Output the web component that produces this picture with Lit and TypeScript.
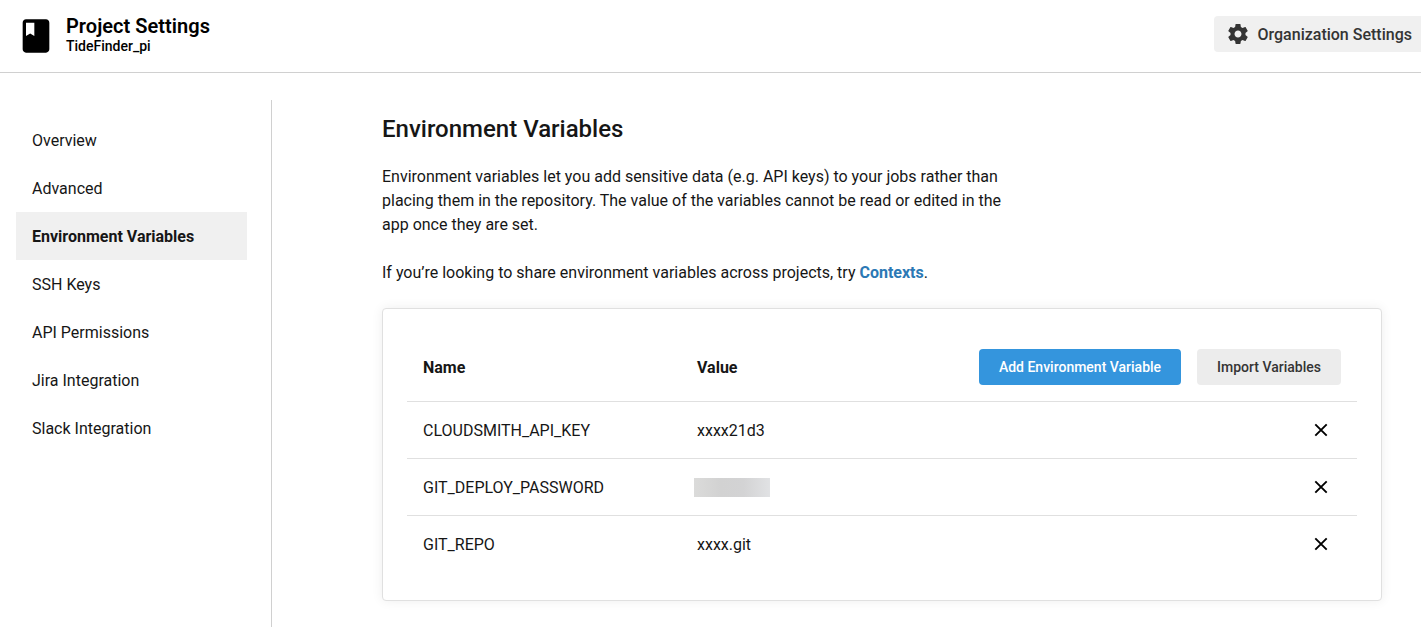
import { LitElement, html, css, svg } from "lit";
import { customElement } from "lit/decorators.js";
import { classMap } from "lit/directives/class-map.js";

const NAV = [
  "Overview",
  "Advanced",
  "Environment Variables",
  "SSH Keys",
  "API Permissions",
  "Jira Integration",
  "Slack Integration",
];

const VARIABLES: { name: string; value: string | null }[] = [
  { name: "CLOUDSMITH_API_KEY", value: "xxxx21d3" },
  { name: "GIT_DEPLOY_PASSWORD", value: null },
  { name: "GIT_REPO", value: "xxxx.git" },
];

const BOOK = svg`<path d="M18 2H6c-1.1 0-2 .9-2 2v16c0 1.1.9 2 2 2h12c1.1 0 2-.9 2-2V4c0-1.1-.9-2-2-2zM6 4h5v8l-2.5-1.5L6 12V4z"/>`;
const GEAR = svg`<path d="M19.43 12.98c.04-.32.07-.64.07-.98s-.03-.66-.07-.98l2.11-1.65c.19-.15.24-.42.12-.64l-2-3.46c-.12-.22-.39-.3-.61-.22l-2.49 1c-.52-.4-1.08-.73-1.69-.98l-.38-2.65C14.46 2.18 14.25 2 14 2h-4c-.25 0-.46.18-.49.42l-.38 2.65c-.61.25-1.17.59-1.69.98l-2.49-1c-.23-.09-.49 0-.61.22l-2 3.46c-.13.22-.07.49.12.64l2.11 1.65c-.04.32-.07.65-.07.98s.03.66.07.98l-2.11 1.65c-.19.15-.24.42-.12.64l2 3.46c.12.22.39.3.61.22l2.49-1c.52.4 1.08.73 1.69.98l.38 2.65c.03.24.24.42.49.42h4c.25 0 .46-.18.49-.42l.38-2.65c.61-.25 1.17-.59 1.69-.98l2.49 1c.23.09.49 0 .61-.22l2-3.46c.12-.22.07-.49-.12-.64l-2.11-1.65zM12 15.5c-1.93 0-3.5-1.57-3.5-3.5s1.57-3.5 3.5-3.5 3.5 1.57 3.5 3.5-1.57 3.5-3.5 3.5z"/>`;
const CLOSE = svg`<path d="M4.3 4.3L15.7 15.7M15.7 4.3L4.3 15.7"/>`;

@customElement("app-root")
export class AppRoot extends LitElement {
  static styles = css`
    :host {
      display: flex;
      flex-direction: column;
      height: 100vh;
      overflow: hidden;
      box-sizing: border-box;
      background: #fff;
      color: #161616;
      font: 400 16px/24px Roboto, "Liberation Sans", sans-serif;
    }
    * { box-sizing: border-box; }
    h1, h2, p { margin: 0; }
    svg { display: block; }
    button {
      font: inherit;
      border: 0;
      padding: 0;
      margin: 0;
      color: inherit;
      background: none;
      white-space: nowrap;
    }
    .header {
      flex: none;
      display: flex;
      align-items: center;
      height: 73px;
      padding-left: 16px;
      border-bottom: 1px solid #d0d0d0;
      color: #000;
    }
    .book { width: 40px; height: 40px; }
    .titles { margin-left: 10px; flex: 1; padding-bottom: 4px; }
    .title { font-size: 20px; line-height: 24px; font-weight: 600; letter-spacing: 0.03px; }
    .project { font-size: 14px; line-height: 16px; font-weight: 500; }
    .org {
      display: flex;
      align-items: center;
      gap: 7.5px;
      height: 36px;
      width: 207px;
      margin-top: -4px;
      padding-left: 12px;
      border-radius: 4px 0 0 4px;
      background: #f0f0f0;
      color: #343434;
      font-weight: 500;
    }
    .org span { padding-top: 2px; }
    .gear { width: 24px; height: 24px; flex: none; }
    .body { flex: 1; display: flex; min-height: 0; }
    .nav {
      flex: none;
      width: 272px;
      margin-top: 27px;
      padding: 16px 24px 0 16px;
      border-right: 1px solid #d0d0d0;
    }
    .link { height: 48px; padding: 13px 0 0 16px; }
    .link.active { background: #f0f0f0; font-weight: 700; }
    .main { width: 1000px; margin-left: 110px; padding-top: 40px; }
    .heading { font-size: 24px; line-height: 32px; font-weight: 500; }
    .text { width: 640px; margin-top: 24px; }
    .heading + .text { margin-top: 20px; }
    .contexts { color: #2b79b5; font-weight: 700; text-decoration: none; }
    .card {
      height: 293px;
      margin-top: 23px;
      padding: 24px 24px 0;
      border: 1px solid #e0e0e0;
      border-radius: 4px;
      background: #fff;
      box-shadow: 0 0 12px rgba(0, 0, 0, 0.07);
    }
    .row {
      display: grid;
      grid-template-columns: 274px 1fr auto;
      align-items: center;
      height: 57px;
      padding: 0 16px;
      border-top: 1px solid #e0e0e0;
    }
    .row span { padding-top: 2px; }
    .row.head { height: 68px; border-top: 0; font-weight: 700; }
    .actions { display: flex; gap: 16px; }
    .btn {
      height: 36px;
      border-radius: 4px;
      font-size: 14px;
      font-weight: 500;
      background: #ececec;
      color: #343434;
      width: 144px;
    }
    .btn.primary { background: #3495dd; color: #fff; width: 202px; }
    .delete { width: 20px; height: 20px; margin-right: 10px; }
    .delete svg { width: 20px; height: 20px; fill: none; stroke: #000; stroke-width: 1.9; }
    .masked {
      width: 76px;
      height: 19px;
      margin-left: -3px;
      background: linear-gradient(90deg, #dbdbda, #d2d2d2 35%, #d3d3d4 65%, #e1e2e4);
    }
  `;

  render() {
    return html`
      <header class="header">
        <svg class="book" viewBox="0 0 24 24">${BOOK}</svg>
        <div class="titles">
          <h1 class="title">Project Settings</h1>
          <div class="project">TideFinder_pi</div>
        </div>
        <button class="org">
          <svg class="gear" viewBox="0 0 24 24" fill="currentColor">${GEAR}</svg>
          <span>Organization Settings</span>
        </button>
      </header>
      <div class="body">
        <nav class="nav">
          ${NAV.map((item) => html`<div class=${classMap({ link: true, active: item === "Environment Variables" })}>${item}</div>`)}
        </nav>
        <main class="main">
          <h2 class="heading">Environment Variables</h2>
          <p class="text">Environment variables let you add sensitive data (e.g. API keys) to your jobs rather than placing them in the repository. The value of the variables cannot be read or edited in the app once they are set.</p>
          <p class="text">If you’re looking to share environment variables across projects, try <a class="contexts">Contexts</a>.</p>
          <section class="card">
            <div class="row head">
              <span>Name</span><span>Value</span>
              <div class="actions">
                <button class="btn primary">Add Environment Variable</button>
                <button class="btn">Import Variables</button>
              </div>
            </div>
            ${VARIABLES.map((v) => html`
              <div class="row">
                <span>${v.name}</span>
                ${v.value === null ? html`<div class="masked"></div>` : html`<span>${v.value}</span>`}
                <button class="delete" aria-label="Delete"><svg viewBox="0 0 20 20">${CLOSE}</svg></button>
              </div>`)}
          </section>
        </main>
      </div>
    `;
  }
}
